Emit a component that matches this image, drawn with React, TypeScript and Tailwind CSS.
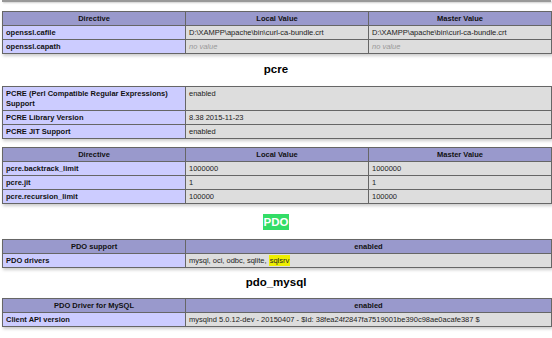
type Row = {name: string; values: React.ReactNode[]; twoLine?: boolean};

const font = {fontFamily: '"Liberation Sans", Arial, sans-serif'};

function InfoTable({head, rows, cols}: {head: string[]; rows: Row[]; cols: number[]}) {
  return (
    <table className="ml-[2px] w-[549px] table-fixed border-collapse shadow-[1px_2px_3px_#ccc] text-[7.5px] leading-[9px]">
      <colgroup>
        {cols.map((w, i) => (
          <col key={i} style={{width: w}} />
        ))}
      </colgroup>
      {head.length > 0 && (
        <thead>
          <tr>
            {head.map((h, i) => (
              <th
                key={i}
                className="border border-[#666] bg-[#9999cc] px-[3px] py-[2px] text-center font-bold text-[#111]"
              >
                {h}
              </th>
            ))}
          </tr>
        </thead>
      )}
      <tbody>
        {rows.map((r, i) => (
          <tr key={i} className="align-baseline">
            <td
              className={`border border-[#666] bg-[#ccccff] px-[3px] py-[2px] font-bold text-[#111] ${
                r.twoLine ? 'leading-[9.5px]' : ''
              }`}
            >
              {r.name}
            </td>
            {r.values.map((v, j) => (
              <td
                key={j}
                className="border border-[#666] bg-[#dddddd] px-[3px] py-[2px] text-[#222] break-all"
              >
                {v}
              </td>
            ))}
          </tr>
        ))}
      </tbody>
    </table>
  );
}

const noValue = <i className="text-[#999]">no value</i>;

export default function App() {
  return (
    <div className="w-[552px] h-[338px] overflow-hidden bg-white" style={font}>
      <div className="ml-[2px] w-[549px] h-[2px] bg-[#999] shadow-[1px_1px_2px_#ccc]" />
      <div className="mt-[9px]">
        <InfoTable
          head={['Directive', 'Local Value', 'Master Value']}
          cols={[183, 183, 183]}
          rows={[
            {
              name: 'openssl.cafile',
              values: ['D:\\XAMPP\\apache\\bin\\curl-ca-bundle.crt', 'D:\\XAMPP\\apache\\bin\\curl-ca-bundle.crt'],
            },
            {name: 'openssl.capath', values: [noValue, noValue]},
          ]}
        />
      </div>

      <h2 className="mt-[9px] mb-[10px] text-center text-[11.5px] leading-[13px] font-bold text-black">pcre</h2>

      <InfoTable
        head={[]}
        cols={[183, 366]}
        rows={[
          {name: 'PCRE (Perl Compatible Regular Expressions) Support', values: ['enabled'], twoLine: true},
          {name: 'PCRE Library Version', values: ['8.38 2015-11-23']},
          {name: 'PCRE JIT Support', values: ['enabled']},
        ]}
      />

      <div className="mt-[8px]">
        <InfoTable
          head={['Directive', 'Local Value', 'Master Value']}
          cols={[183, 183, 183]}
          rows={[
            {name: 'pcre.backtrack_limit', values: ['1000000', '1000000']},
            {name: 'pcre.jit', values: ['1', '1']},
            {name: 'pcre.recursion_limit', values: ['100000', '100000']},
          ]}
        />
      </div>

      <h2 className="mt-[10px] mb-[9px] text-center text-[11.5px] leading-[14px] font-bold">
        <span className="inline-block bg-[#33dd66] px-[1px] py-[1px] text-white">PDO</span>
      </h2>

      <InfoTable
        head={['PDO support', 'enabled']}
        cols={[183, 366]}
        rows={[
          {
            name: 'PDO drivers',
            values: [
              <>
                mysql, oci, odbc, sqlite,{' '}
                <span className="bg-[#eeee00] px-[1px] py-[1px]">sqlsrv</span>
              </>,
            ],
          },
        ]}
      />

      <h2 className="mt-[8px] mb-[9px] text-center text-[11.5px] leading-[13px] font-bold text-black">pdo_mysql</h2>

      <InfoTable
        head={['PDO Driver for MySQL', 'enabled']}
        cols={[183, 366]}
        rows={[
          {
            name: 'Client API version',
            values: ['mysqlnd 5.0.12-dev - 20150407 - $Id: 38fea24f2847fa7519001be390c98ae0acafe387 $'],
          },
        ]}
      />
    </div>
  );
}
